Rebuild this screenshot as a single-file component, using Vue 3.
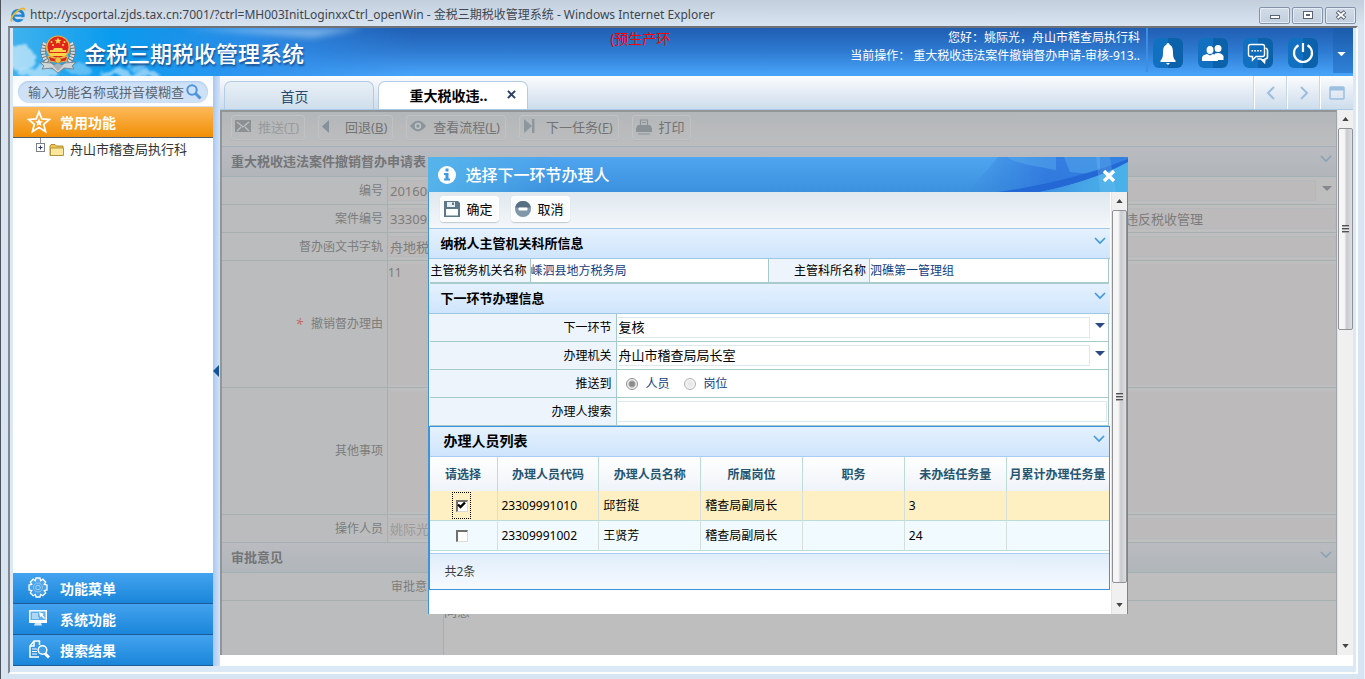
<script setup>
import { ref } from 'vue'

const address = 'http://yscportal.zjds.tax.cn:7001/?ctrl=MH003InitLoginxxCtrl_openWin - 金税三期税收管理系统 - Windows Internet Explorer'

const menus = [
  { key: 'gear', text: '功能菜单' },
  { key: 'screen', text: '系统功能' },
  { key: 'result', text: '搜索结果' }
]

const tools = [
  { key: 'mail', text: '推送', hot: 'T', faint: true },
  { key: 'back', text: '回退', hot: 'B' },
  { key: 'eye', text: '查看流程', hot: 'L' },
  { key: 'next', text: '下一任务', hot: 'F' },
  { key: 'print', text: '打印' }
]

const fields = [
  { id: 'f-no', label: '编号', value: '201600', caret: true },
  { id: 'f-case', label: '案件编号', value: '333092', extra: '违反税收管理' },
  { id: 'f-doc', label: '督办函文书字轨', value: '舟地税' }
]

const columns = ['请选择', '办理人员代码', '办理人员名称', '所属岗位', '职务', '未办结任务量', '月累计办理任务量']
const people = ref([
  { code: '23309991010', name: '邱哲挺', post: '稽查局副局长', duty: '', open: '3', month: '', picked: true },
  { code: '23309991002', name: '王贤芳', post: '稽查局副局长', duty: '', open: '24', month: '', picked: false }
])
const target = ref('person')
const reason = ref('11')
const opinion = ref('同意')
</script>

<template>
  <div class="window">
    <header class="titlebar">
      <svg class="ie" viewBox="0 0 16 16" width="16" height="16">
        <circle cx="8" cy="8.6" r="5.2" fill="none" stroke="#1d86d8" stroke-width="3" />
        <path d="M4 8.6h9" stroke="#1d86d8" stroke-width="2.2" />
        <path d="M10 11.2h5" stroke="#ccd8e5" stroke-width="2" />
        <path d="M2.2 14.6C-.6 13.4 3 7 7.500 4 11 1.300 14.800 .2 14.600 3.400" fill="none" stroke="#e9b62c" stroke-width="1.700" />
      </svg>
      <span class="address">{{ address }}</span>
      <div class="winbtns">
        <button type="button" aria-label="最小化"><svg width="12" height="10" viewBox="0 0 12 10"><rect x="1.500" y="5.500" width="9" height="3" fill="#fff" stroke="#5b6473" /></svg></button>
        <button type="button" aria-label="最大化"><svg width="12" height="10" viewBox="0 0 12 10"><rect x="1.500" y="1.500" width="9" height="7" fill="#fff" stroke="#5b6473" /><rect x="4.500" y="4.500" width="3" height="1" fill="#fff" stroke="#5b6473" /></svg></button>
        <button type="button" aria-label="关闭"><svg width="12" height="10" viewBox="0 0 12 10"><path d="M2 1.500l8 7M10 1.500l-8 7" stroke="#5b6473" stroke-width="3.800" /><path d="M2.500 2l7 6M9.500 2l-7 6" stroke="#fff" stroke-width="1.800" /></svg></button>
      </div>
    </header>

    <div class="frame">
      <div class="banner">
        <svg class="sky" viewBox="0 0 400 48" width="400" height="48">
          <defs>
            <filter id="soft" x="-30%" y="-50%" width="160%" height="200%"><feGaussianBlur stdDeviation="3" /></filter>
            <filter id="cloud" x="-30%" y="-30%" width="160%" height="160%">
              <feTurbulence type="fractalNoise" baseFrequency="0.07" numOctaves="3" seed="4" result="n" />
              <feDisplacementMap in="SourceGraphic" in2="n" scale="16" />
              <feGaussianBlur stdDeviation="1" />
            </filter>
            <linearGradient id="cyan" x1="0" x2="1"><stop offset="0" stop-color="#3fb2ee" /><stop offset=".25" stop-color="#0a9bee" /><stop offset=".6" stop-color="#2a92ee" stop-opacity=".8" /><stop offset="1" stop-color="#2f86e0" stop-opacity="0" /></linearGradient>
          </defs>
          <rect width="400" height="48" fill="url(#cyan)" />
          <path d="M170 0H350L300 10Z" fill="#a9d3f7" opacity=".6" filter="url(#soft)" />
          <g fill="#fff" filter="url(#cloud)">
            <ellipse cx="6" cy="28" rx="13" ry="14" opacity=".55" />
            <ellipse cx="26" cy="44" rx="22" ry="6" opacity=".5" />
            <ellipse cx="116" cy="46" rx="30" ry="4" opacity=".5" />
            <ellipse cx="126" cy="38" rx="12" ry="4" opacity=".35" />
            <ellipse cx="66" cy="42" rx="12" ry="5" opacity=".3" />
          </g>
        </svg>
        <div class="brand">
          <svg class="emblem" viewBox="0 0 38 40" width="38" height="40">
            <path d="M6 9C2 17 4 28 15 33M32 9c4 8 2 19-9 24" fill="none" stroke="#6f7276" stroke-width="5" />
            <path d="M6 9C2 17 4 28 15 33M32 9c4 8 2 19-9 24" fill="none" stroke="#d9dcdf" stroke-width="4" stroke-dasharray="2 1" />
            <path d="M1 28l11 1 7 5 7-5 11-1-4 4 2 3-10-1-6 5-6-5-10 1 2-3z" fill="#cfd5d9" stroke="#727a81" stroke-width=".8" />
            <path d="M14 32l5-3 5 3-5 5z" fill="#a8b0b8" />
            <circle cx="19" cy="13.500" r="12" fill="#e9b33c" />
            <circle cx="19" cy="13" r="10.500" fill="#e0251d" />
            <path d="M19 3.500l1 2.200 2.400.2-1.800 1.500.6 2.300-2.200-1.200-2.200 1.200.6-2.300-1.800-1.500 2.400-.2z" fill="#ffd94d" />
            <g fill="#ffd94d"><circle cx="12.500" cy="8" r="1" /><circle cx="25.500" cy="8" r="1" /><circle cx="14" cy="11" r="1" /><circle cx="24" cy="11" r="1" /></g>
            <path d="M11 18h16v-2h-3l-1-2h-8l-1 2h-3zM10 19h18l-2 3H12z" fill="#ffd24a" />
            <path d="M9 22q10 5 20 0l-2 5q-8 3-16 0z" fill="#d9261d" stroke="#eab842" />
            <circle cx="19" cy="26" r="3" fill="#efc14a" stroke="#b1771d" stroke-width=".6" />
          </svg>
          <h1>金税三期税收管理系统</h1>
        </div>
        <p class="notice">(预生产环</p>
        <div class="user">
          <p>您好：姚际光，舟山市稽查局执行科</p>
          <p>当前操作： 重大税收违法案件撤销督办申请-审核-913..</p>
        </div>
        <nav class="quick">
          <button type="button" aria-label="提醒"><svg viewBox="0 0 30 30" width="30" height="30"><path d="M15 5a1.500 1.500 0 0 1 1.500 1.500C19.500 8 20 11 20 15c0 4 .8 6 2.500 7.500V24h-15v-1.500C9.200 21 10 19 10 15c0-4 .5-7 3.500-8.500A1.500 1.500 0 0 1 15 5zM13 25h4l-2 2z" fill="#fff" /></svg></button>
          <button type="button" aria-label="联系人"><svg viewBox="0 0 30 30" width="30" height="30"><g fill="#fff"><circle cx="20" cy="10.500" r="3.500" /><path d="M17 15.500q6-1.500 8.500 2.500v4h-6q-1-3-3.500-4z" /><ellipse cx="12" cy="12" rx="4" ry="4.500" stroke="#0d68b4" /><path d="M4 23v-3q0-3 5-4l3 1.500 3-1.500q5 1 5 4v3z" /></g></svg></button>
          <button type="button" aria-label="消息"><svg viewBox="0 0 30 30" width="30" height="30"><path d="M22.500 10q2 .5 2 2.500v6q0 2.500-2.500 2.500l-.5 3.500-3.500-3.500h-3.500" fill="none" stroke="#fff" stroke-width="1.600" /><path d="M18 21h3.500v3.500z" fill="#fff" /><path d="M7.500 6.500h12q2 0 2 2v8q0 2-2 2H13l-3.500 3.500v-3.500h-2q-2 0-2-2v-8q0-2 2-2z" fill="#0f6bb9" stroke="#fff" stroke-width="1.400" /><g fill="#fff"><rect x="8.500" y="12" width="1.600" height="1.600" /><rect x="11.300" y="12" width="1.600" height="1.600" /><rect x="14.100" y="12" width="1.600" height="1.600" /><rect x="16.900" y="12" width="1.600" height="1.600" /></g></svg></button>
          <button type="button" aria-label="退出"><svg viewBox="0 0 30 30" width="30" height="30"><path d="M10.500 7.200a9 9 0 1 0 9 0M15 5v9" fill="none" stroke="#fff" stroke-width="2.200" /></svg></button>
          <button type="button" class="more" aria-label="更多"><svg viewBox="0 0 10 6" width="9" height="5"><path d="M0 0h10L5 5z" fill="#fff" /></svg></button>
        </nav>
      </div>

      <div class="body">
        <aside class="side">
          <div class="search">
            <label>
              <input type="text" placeholder="输入功能名称或拼音模糊查" aria-label="搜索功能" />
              <svg viewBox="0 0 16 16" width="16" height="16"><circle cx="6" cy="6" r="4.700" fill="none" stroke="#4d94dc" stroke-width="2" /><path d="M9.500 9.500l5 5" stroke="#4d94dc" stroke-width="3" /></svg>
            </label>
          </div>
          <button type="button" class="acc hot">
            <svg viewBox="0 0 24 24" width="24" height="24"><path d="M12 1.800l2.900 7 7.500.6-5.700 4.900 1.800 7.300-6.500-4-6.500 4 1.800-7.300-5.700-4.900 7.500-.6z" fill="none" stroke="#fff" stroke-width="1.800" /><path d="M12 8.500l1.100 2.600 2.700.3-2 1.800.6 2.700-2.400-1.500-2.400 1.500.6-2.700-2-1.800 2.700-.3z" fill="#fff" /></svg>
            <span>常用功能</span>
          </button>
          <div class="tree">
            <svg viewBox="0 0 10 14" width="10" height="14"><path d="M4.500 0v5" stroke="#8d929b" /><rect x=".5" y="5.500" width="8" height="8" fill="#fff" stroke="#7b7f88" /><path d="M2.500 9.500h4M4.500 7.500v4" stroke="#27338a" /></svg>
            <svg viewBox="0 0 16 14" width="16" height="14"><path d="M1 3l1-1.500h4L7.500 3H14v9.500H1z" fill="#f0c54a" stroke="#9a7b22" stroke-width=".8" /><path d="M1.500 5H14.500v7.500H1.500z" fill="#fbe79b" stroke="#a58a32" stroke-width=".8" /></svg>
            <a href="#">舟山市稽查局执行科</a>
          </div>
          <button v-for="m in menus" :key="m.key" type="button" class="acc">
            <svg v-if="m.key === 'gear'" viewBox="0 0 24 24" width="24" height="24"><path d="M10 2h4l.6 2.700 2.300-1.500 2.800 2.800-1.400 2.400L21 9v5l-2.700.7 1.400 2.300-2.800 2.800-2.300-1.400L14 21h-4l-.6-2.600-2.300 1.400L4.300 17l1.400-2.300L3 14V9l2.700-.6L4.300 6l2.800-2.800 2.300 1.500z" fill="#ffffff22" stroke="#fff" stroke-width="1.300" /><circle cx="12" cy="11.500" r="4.500" fill="none" stroke="#8fc8f7" /><circle cx="12" cy="11.500" r="2.300" fill="none" stroke="#a9d5fa" /></svg>
            <svg v-else-if="m.key === 'screen'" viewBox="0 0 24 24" width="24" height="24"><path d="M3 3h18v13H3z" fill="#fff" /><path d="M4.500 4.500h15V13h-15z" fill="#5fb0ee" /><path d="M6 7h6M6 9h6M6 11h7" stroke="#fff" /><path d="M13 5l5 2-1.500 1 2.500 3-1 1-2.800-3-1 1.500z" fill="#fff" /><path d="M9 16h6l1 2.500H8z" fill="#d3e9fb" /></svg>
            <svg v-else viewBox="0 0 24 24" width="24" height="24"><path d="M13.500 7V3H8L4 8v11h9M8 3v5H4" fill="none" stroke="#fff" stroke-width="1.500" /><path d="M6 11h5M6 13.500h5M6 16h5" stroke="#fff" /><circle cx="16.500" cy="12" r="4.300" fill="#3e9fe8" stroke="#fff" stroke-width="1.500" /><path d="M19 15.500l4 4" stroke="#fff" stroke-width="3" /></svg>
            <span>{{ m.text }}</span>
          </button>
        </aside>
        <div class="splitter"><svg viewBox="0 0 6 12" width="6" height="12"><path d="M6 0v12L0 6z" fill="#12539c" /></svg></div>

        <main class="main">
          <div class="tabbar">
            <button type="button" class="tab">首页</button>
            <button type="button" class="tab on"><span>重大税收违..</span><svg viewBox="0 0 10 10" width="9" height="9"><path d="M1 1l8 8M9 1L1 9" stroke="#2a4167" stroke-width="2.200" /></svg></button>
            <div class="tabnav">
              <button type="button" aria-label="上一个"><svg viewBox="0 0 10 14" width="10" height="14"><path d="M8 1L2 7l6 6" fill="none" stroke="#9abfe0" stroke-width="2" /></svg></button>
              <button type="button" aria-label="下一个"><svg viewBox="0 0 10 14" width="10" height="14"><path d="M2 1l6 6-6 6" fill="none" stroke="#9abfe0" stroke-width="2" /></svg></button>
              <button type="button" aria-label="全屏"><svg viewBox="0 0 16 14" width="16" height="14"><rect x="1" y="1" width="14" height="12" rx="1" fill="none" stroke="#9abfe0" stroke-width="1.500" /><path d="M1 1h14v3.500H1z" fill="#9abfe0" /></svg></button>
            </div>
          </div>

          <div class="stage">
            <div class="pane">
              <div class="toolbar">
                <button v-for="t in tools" :key="t.key" type="button" class="tool" :class="{ faint: t.faint }">
                  <svg viewBox="0 0 16 16" width="16" height="16">
                    <g v-if="t.key === 'mail'"><path d="M0 1h16v12H0z" fill="#8c9093" /><path d="M2 3l6 5 6-5M2 12l4-4M14 12l-4-4" fill="none" stroke="#bec1c3" stroke-width="1.300" /></g>
                    <path v-else-if="t.key === 'back'" d="M7 1v13L0 7.500z" fill="#85909a" />
                    <g v-else-if="t.key === 'eye'"><path d="M0 7Q8-3.500 16 7 8 17.500 0 7z" fill="#8b969c" /><circle cx="8" cy="7" r="3.200" fill="#c0c4c6" /><circle cx="8" cy="7" r="1.700" fill="#8b969c" /></g>
                    <path v-else-if="t.key === 'next'" d="M1 0l8 7-8 7zM9 0h2.500v14H9z" fill="#8d989e" />
                    <g v-else><path d="M4.500 6V1h7v5M6 3.500h4" fill="none" stroke="#8a9297" stroke-width="1.200" /><path d="M2 6h12l2 3v4H0V9z" fill="#8a9297" /><path d="M2 15h12" stroke="#8a9297" /></g>
                  </svg>
                  <span>{{ t.text }}<template v-if="t.hot">(<u>{{ t.hot }}</u>)</template></span>
                </button>
              </div>
              <h2 class="sect"><span>重大税收违法案件撤销督办申请表</span><svg class="chev" viewBox="0 0 12 8" width="12" height="8"><path d="M1 1l5 5 5-5" /></svg></h2>
              <div v-for="f in fields" :key="f.id" class="row">
                <label :for="f.id">{{ f.label }}</label>
                <div class="cell">
                  <input :id="f.id" type="text" :value="f.value" disabled />
                  <input v-if="f.extra" class="extra" type="text" :value="f.extra" aria-label="案件名称" disabled />
                  <svg v-if="f.caret" class="caret" viewBox="0 0 10 6" width="10" height="6"><path d="M0 0h10L5 5z" fill="#85888c" /></svg>
                </div>
              </div>
              <div class="row tall">
                <label for="reason"><i>*</i>撤销督办理由</label>
                <div class="cell"><textarea id="reason" v-model="reason" disabled></textarea></div>
              </div>
              <div class="row tall">
                <label for="other">其他事项</label>
                <div class="cell"><textarea id="other" disabled></textarea></div>
              </div>
              <div class="row faint">
                <label for="operator">操作人员</label>
                <div class="cell"><input id="operator" type="text" value="姚际光" disabled /></div>
              </div>
              <h2 class="sect"><span>审批意见</span><svg class="chev" viewBox="0 0 12 8" width="12" height="8"><path d="M1 1l5 5 5-5" /></svg></h2>
              <div class="row wide"><label for="opinion">审批意见</label><div class="cell"></div></div>
              <div class="row wide last"><label for="opinion"></label><div class="cell"><textarea id="opinion" v-model="opinion" disabled></textarea></div></div>
            </div>

            <div class="bar"><svg viewBox="0 0 8 5" width="7" height="4"><path d="M4 0l4 5H0z" fill="#444" /></svg><div class="thumb page"><b></b></div><svg viewBox="0 0 8 5" width="7" height="4"><path d="M4 5l4-5H0z" fill="#444" /></svg></div>

            <div class="veil">
              <section class="dialog" role="dialog" aria-labelledby="dlg-title">
                <header class="dlg-head">
                  <svg class="swoosh" viewBox="0 0 180 35" preserveAspectRatio="none">
                    <defs><linearGradient id="deep" x1="0" x2="1"><stop offset="0" stop-color="#2d74da" stop-opacity="0" /><stop offset=".5" stop-color="#2b70dc" /><stop offset="1" stop-color="#2a77dd" /></linearGradient><linearGradient id="aqua" x1="0" x2="1"><stop offset="0" stop-color="#3c8fe0" /><stop offset=".5" stop-color="#46a5e6" /><stop offset="1" stop-color="#4ab2ea" /></linearGradient></defs>
                    <path d="M50 0H180V10Q120 30 60 35H20Z" fill="url(#deep)" opacity=".75" />
                    <path d="M60 0q0 5 48 13V0zM116 0l6 15 30 3V0z" fill="#5cafee" opacity=".45" />
                    <path d="M50 35Q125 24 180 2v4Q140 26 92 35z" fill="#2468d6" />
                    <path d="M92 35Q145 24 180 5v30z" fill="url(#aqua)" />
                    <path d="M148 0h14l6 35h-16z" fill="#7cc8f2" opacity=".25" />
                  </svg>
                  <svg viewBox="0 0 18 18" width="18" height="18"><circle cx="9" cy="9" r="9" fill="#fff" /><path d="M7.500 2.500h3v3h-3zM6 7h4.500v5.500H12V14.500H6v-2h1.500V9H6z" fill="#3e9be0" /></svg>
                  <h2 id="dlg-title">选择下一环节办理人</h2>
                  <button type="button" aria-label="关闭"><svg viewBox="0 0 14 14" width="14" height="14"><path d="M2 2l10 10M12 2L2 12" stroke="#fff" stroke-width="3.400" /></svg></button>
                </header>
                <div class="dlg-body">
                  <div class="dlg-main">
                    <div class="toolbar light">
                      <button type="button" class="tool"><svg viewBox="0 0 16 16" width="16" height="16"><path d="M0 0h14l2 2v14H0z" fill="#5c7889" /><path d="M5 1h6v5H3V1z" fill="#e9eef1" /><path d="M8 1.500h2V4H8z" fill="#5c7889" /><path d="M2 8h12v6.500H2z" fill="#fff" /></svg><span>确定</span></button>
                      <button type="button" class="tool"><svg viewBox="0 0 16 16" width="16" height="16"><circle cx="8" cy="8" r="8" fill="#7f97a8" /><path d="M.3 6.500a7.800 7.800 0 0 1 15.400 0z" fill="#566f82" /><rect x="3.500" y="6.500" width="9" height="3" rx="1" fill="#fff" /></svg><span>取消</span></button>
                    </div>
                    <h3 class="band"><span>纳税人主管机关科所信息</span><svg class="chev" viewBox="0 0 12 8" width="12" height="8"><path d="M1 1l5 5 5-5" /></svg></h3>
                    <dl class="info">
                      <dt>主管税务机关名称</dt><dd>嵊泗县地方税务局</dd>
                      <dt>主管科所名称</dt><dd>泗礁第一管理组</dd>
                    </dl>
                    <h3 class="band"><span>下一环节办理信息</span><svg class="chev" viewBox="0 0 12 8" width="12" height="8"><path d="M1 1l5 5 5-5" /></svg></h3>
                    <form class="form">
                      <div class="line"><label for="step">下一环节</label><div class="val"><select id="step"><option>复核</option></select><svg class="caret" viewBox="0 0 10 6" width="10" height="6"><path d="M0 0h10L5 5z" fill="#294a86" /></svg></div></div>
                      <div class="line"><label for="org">办理机关</label><div class="val"><select id="org"><option>舟山市稽查局局长室</option></select><svg class="caret" viewBox="0 0 10 6" width="10" height="6"><path d="M0 0h10L5 5z" fill="#294a86" /></svg></div></div>
                      <div class="line"><span class="lab">推送到</span><div class="val radios">
                        <label><input v-model="target" type="radio" value="person" />人员</label>
                        <label><input v-model="target" type="radio" value="post" />岗位</label>
                      </div></div>
                      <div class="line"><label for="find">办理人搜索</label><div class="val"><input id="find" type="text" /></div></div>
                    </form>
                    <div class="list">
                      <h3 class="band big"><span>办理人员列表</span><svg class="chev" viewBox="0 0 12 8" width="12" height="8"><path d="M1 1l5 5 5-5" /></svg></h3>
                      <table>
                        <thead><tr><th v-for="c in columns" :key="c">{{ c }}</th></tr></thead>
                        <tbody>
                          <tr v-for="p in people" :key="p.code" :class="{ picked: p.picked }">
                            <td class="tick"><label><input v-model="p.picked" type="checkbox" :aria-label="p.name" /><svg v-if="p.picked" viewBox="0 0 9 9" width="9" height="9"><path d="M1 3.500l2.500 2.500L8 1.500" fill="none" stroke="#000" stroke-width="2.400" /></svg></label></td>
                            <td>{{ p.code }}</td><td>{{ p.name }}</td><td>{{ p.post }}</td><td>{{ p.duty }}</td><td>{{ p.open }}</td><td>{{ p.month }}</td>
                          </tr>
                        </tbody>
                      </table>
                      <p class="total">共2条</p>
                    </div>
                  </div>
                  <div class="bar"><svg viewBox="0 0 8 5" width="7" height="4"><path d="M4 0l4 5H0z" fill="#444" /></svg><div class="thumb"><b></b></div><svg viewBox="0 0 8 5" width="7" height="4"><path d="M4 5l4-5H0z" fill="#444" /></svg></div>
                </div>
              </section>
            </div>
          </div>
        </main>
      </div>
    </div>
  </div>
</template>

<style>
html, body { margin: 0; background: #d8e4f1; }
</style>

<style scoped>
.window, .window * { box-sizing: border-box; }
.window {
  min-height: 100vh; display: flex; flex-direction: column;
  border-left: 1px solid #4d545c; border-right: 1px solid #e9f1f8;
  background: linear-gradient(#c3cfdc, #d9e4f1 26px, #d7e4f1);
  font: 12px/18px "Noto Sans", "Noto Sans CJK SC", sans-serif; color: #000;
}
.window button { font: inherit; color: inherit; border: 0; padding: 0; background: none; }
.window input, .window select, .window textarea { font: inherit; color: inherit; }
.window svg { display: block; flex: none; }
h1, h2, h3, p, dl, dd { margin: 0; font-size: 12px; }

.titlebar { height: 26px; display: flex; align-items: center; gap: 4px; padding: 4px 8px 0 9px; color: #3d4650; }
.address { flex: 1; white-space: nowrap; overflow: hidden; }
.winbtns { display: flex; gap: 2px; }
.winbtns button { width: 31px; height: 17px; display: grid; place-items: center; border: 1px solid #8593a9; border-radius: 2px; background: linear-gradient(#d2dce8, #c2cfdf); box-shadow: inset 0 0 0 1px #e3ebf4; }

.frame { flex: 1; display: flex; flex-direction: column; margin: 0 6px 5px 7px; padding: 0 3px 6px; border: 2px solid; border-color: #6f7276 #fdfdfd #fdfdfd #85888d; background: #dbe9f7; }
.banner { position: relative; height: 48px; display: flex; align-items: flex-start; background: linear-gradient(#1f5eb3, #2f7bd2 50%, #49a6fb); color: #fff; }
.sky { position: absolute; left: 0; top: 0; }
.brand { position: relative; display: flex; align-items: center; gap: 7px; height: 48px; margin: 2px 0 0 26px; }
.brand h1 { padding-bottom: 2px; font-size: 22px; line-height: 32px; font-weight: 500; text-shadow: 1px 2px 2px #1c4f8f; white-space: nowrap; }
.notice { width: 240px; margin-left: auto; padding-top: 2px; font-size: 14px; color: #f00; }
.user { padding-top: 1px; text-align: right; white-space: nowrap; }
.quick { display: flex; gap: 15px; height: 44px; margin-left: 6px; padding-left: 5px; border-left: 2px solid #3d8ee0; }
.quick button { width: 30px; height: 30px; margin-top: 10px; border-radius: 6px; background: linear-gradient(90deg, #1270c0 50%, #0b62ab 50%); }
.quick .more { width: 20px; height: 45px; margin-top: 0; border-radius: 0; display: grid; place-items: center; background: linear-gradient(#1b5bab, #2f82d8); padding: 8px 3px 0 0; }

.body { flex: 1; display: flex; }
.side { width: 200px; display: flex; flex-direction: column; background: #fff; }
.search { height: 31px; padding: 5px; background: linear-gradient(#f7fafd, #fff); border-bottom: 1px solid #d5dfe9; }
.search label { height: 22px; display: flex; align-items: center; padding: 0 6px 0 10px; border-radius: 11px; background: #cfe1f7; box-shadow: inset 0 1px 2px #a9c9ec; }
.search input { flex: 1; min-width: 0; padding: 0; border: 0; outline: 0; background: none; font-size: 13px; }
.search input::placeholder { color: #5b6673; opacity: 1; }
.acc { height: 31px; flex: none; display: flex; align-items: center; }
.side .acc { gap: 9px; padding: 0 0 0 14px; border-bottom: 1px solid #20599a; background: linear-gradient(#44a3ef, #1a86da); color: #fff; font-size: 14px; font-weight: 700; }
.side .acc svg { margin-left: -1px; margin-right: 1px; }
.side .acc span { padding-top: 2px; }
.side .hot { background: linear-gradient(#fdb95a, #f18f05); border-bottom-color: #4d5c70; }
.side .hot svg { margin: 0; }
.tree { flex: 1; display: flex; align-items: flex-start; gap: 3px; padding: 0 22px 0 23px; }
.tree svg + svg { margin: 5px 2px 0 0; }
.tree a { margin-top: 2px; font-size: 13px; line-height: 18px; color: #333; text-decoration: none; white-space: nowrap; }
.splitter { width: 7px; display: flex; align-items: center; background: linear-gradient(90deg, #a9c8ee, #cfe3fa); }

.main { flex: 1; min-width: 0; display: flex; flex-direction: column; background: #fff; }
.tabbar { height: 34px; display: flex; align-items: flex-end; gap: 4px; padding-left: 4px; background: linear-gradient(#fbfdfe, #e4ebf4 50%, #cdddec); border-bottom: 1px solid #a8c8e4; }
.tabbar .tab { width: 150px; height: 28px; display: flex; align-items: center; justify-content: center; gap: 20px; padding: 2px 9px 0 0; border: 1px solid #b4cbe5; border-bottom: 0; border-radius: 7px 7px 0 0; background: linear-gradient(#e9f0f6, #cfdeec); color: #29486f; font-size: 14px; }
.tabbar .on { background: #fff; color: #000; font-weight: 700; padding: 0 0 0 20px; }
.tab svg { margin-bottom: 2px; }
.tabnav { display: flex; align-self: stretch; margin-left: auto; }
.tabnav button { width: 33px; display: grid; place-items: center; border-left: 1px solid #fff; box-shadow: -1px 0 #c6d8e8; }

.stage { flex: 1; position: relative; display: flex; margin-bottom: 11px; }
.pane { flex: 1; min-width: 0; display: flex; flex-direction: column; border: 2px solid #929699; border-right: 1px solid #9fa5a8; border-bottom: 0; background: #bebebe; color: #7c7c7c; }
.toolbar { height: 35px; display: flex; align-items: center; gap: 13px; padding: 0 8px 4px 9px; border-bottom: 1px solid #a3b1bb; background: linear-gradient(#b3b7b9, #bdbdbe); }
.tool { height: 25px; display: flex; align-items: center; gap: 7px; }
.toolbar .tool { padding: 0 6px 0 4px; border-radius: 4px; box-shadow: inset 0 0 0 1px #c1c2c3, 0 1px #b3b6b8; font-size: 13px; color: #727375; }
.toolbar .faint { color: #999b9e; }
.sect { height: 30px; display: flex; align-items: center; justify-content: space-between; padding: 0 4px 2px 9px; border-bottom: 1px solid #a3b1b5; background: linear-gradient(#b9bbc0, #b1b6bb); font-size: 13px; color: #747577; }
.chev { margin-bottom: 4px; fill: none; stroke: #3f98de; stroke-width: 1.6; }
.sect .chev { stroke: #8ba3b5; }
.row { height: 28px; display: flex; border-bottom: 1px solid #a7b0b0; }
.row > label { width: 166px; flex: none; display: flex; align-items: center; justify-content: flex-end; gap: 8px; padding-right: 4px; border-right: 1px solid #a7b0b0; background: #bbbcbd; }
.row i { color: #c56a64; font-size: 14px; }
.cell { flex: 1; display: flex; align-items: center; min-width: 0; }
.cell input, .cell textarea { flex: 1; min-width: 0; height: 21px; margin: 0; padding: 0 2px; border: 1px solid #b5b9bc; border-left: 0; background: #bcbaba; font-size: 13px; }
.cell .extra { flex: none; width: 213px; }
.cell .caret { margin: 0 4px 4px 6px; }
.tall { height: 127px; }
.cell textarea { height: 121px; padding: 0; border: 0; resize: none; font-size: 12px; }
.faint input { color: #9b9b9b; }
.wide > label { width: 222px; }
.wide > .cell { align-items: stretch; }
.last { flex: 1; border: 0; }
.cell #opinion { height: auto; padding-top: 1px; background: #bebebe; font-size: 13px; }

.bar { width: 16px; flex: none; display: flex; flex-direction: column; align-items: center; padding: 7px 0; background: #f0f0f0; border-left: 1px solid #e4e4e4; }
.bar > svg:last-child { margin-top: auto; }
.thumb { width: 15px; flex: 1; margin: 7px 0 20px; display: grid; place-items: center; border: 1px solid #8f9196; border-radius: 2px; background: linear-gradient(90deg, #f6f6f6 40%, #c9cacd 60%, #dfe0e2); }
.thumb b { width: 7px; height: 8px; background: repeating-linear-gradient(#505257 0 1px, #aaa 1px 2px, #e7e7e7 2px 3px); }
.page { flex: 0 0 38%; }

.veil { position: absolute; inset: 0; display: flex; align-items: center; justify-content: center; padding: 6px 18px 0 0; }
.dialog { width: 700px; max-width: 100%; background: #fff; }
.dlg-head { position: relative; height: 35px; display: flex; align-items: center; gap: 10px; padding: 0 12px 0 10px; background: linear-gradient(100deg, #56b4ea, #4aa3ea00 18%), linear-gradient(#4fa5ef, #3b91de); color: #fff; }
.dlg-head > svg, .dlg-head > button { position: relative; }
.dlg-head > .swoosh { position: absolute; right: 0; top: 0; width: 180px; height: 35px; }
.dlg-head h2 { position: relative; flex: 1; font-size: 16px; line-height: 24px; font-weight: 500; }
.dlg-head button { margin-top: 3px; }
.dlg-body { display: flex; border: 1px solid #3e93dc; border-width: 0 1px; }
.dlg-main { flex: 1; min-width: 0; margin-right: 1px; padding-bottom: 24px; }
.light { height: 37px; gap: 12px; padding: 0 10px 2px 11px; border-color: #a5c8e4; background: linear-gradient(#dee8ef, #f4f7fa); }
.light .tool { height: 26px; background: #fafcfd; box-shadow: inset 0 0 0 1px #fff, 0 1px 1px #bfc8cf; color: #000; }
.band { height: 30px; display: flex; align-items: center; justify-content: space-between; padding: 0 4px 2px 12px; border-bottom: 1px solid #9ec7e2; background: linear-gradient(#e5f1fe, #cfe5fc); font-size: 13px; }
.info { height: 25px; display: flex; margin: 0 1px; border-bottom: 2px solid #a8cccc; line-height: 23px; white-space: nowrap; }
.info dt { width: 101px; text-align: right; padding-right: 3px; background: #edf4fc; border-right: 1px solid #a5caca; }
.info dd { flex: 1; color: #12407f; border-right: 1px solid #a5caca; }
.form { margin: 0 1px; border-right: 1px solid #a5caca; }
.line { height: 28px; display: flex; border-bottom: 1px solid #a5caca; }
.line > label, .lab { width: 187px; flex: none; padding-right: 4px; text-align: right; line-height: 27px; background: #edf4fc; border-right: 1px solid #a5caca; }
.val { flex: 1; display: flex; align-items: center; padding-right: 1px; }
.val select, .val > input { flex: 1; min-width: 0; height: 21px; padding: 0 2px; border: 1px solid #dce9ef; border-left-color: #fff; background: #fff; appearance: none; outline: 0; }
.line .val select { padding: 0 1px 3px; font-size: 13px; }
.val .caret { margin: 0 2px 4px 5px; }
.radios { color: #12407f; }
.radios label { display: flex; align-items: center; gap: 8px; margin-right: 14px; }
.radios label:first-child { margin-left: 9px; }
.radios input { appearance: none; width: 12px; height: 12px; margin: 0; border: 1px solid #b4b4b4; border-radius: 50%; background: radial-gradient(#e4e4e4, #fafafa); }
.radios input:checked { border-color: #909090; background: radial-gradient(#8c8c8c 0 2px, #a3a3a3 3px, #f0f0f0 4px); }
.list { border: 1px solid #3e93dc; }
.big { font-size: 14px; padding-left: 14px; border-color: #a9cdf1; }
table { width: 100%; table-layout: fixed; border-collapse: separate; border-spacing: 0; }
th:first-child { width: 68px; }
th { height: 34px; padding: 2px 0 0; background: linear-gradient(#fff, #eff3f9); color: #255571; white-space: nowrap; border-right: 1px solid #bcdcd6; }
td { height: 30px; padding: 0 4px; border-right: 1px solid #d5dfdc; border-bottom: 1px solid #bcdcd6; background: #f1fafe; white-space: nowrap; }
th:last-child, td:last-child { border-right: 0; }
.picked td { background: #fff0c4; }
.tick label { position: relative; width: 19px; height: 27px; margin: 0 auto; display: grid; place-items: center; }
td.tick { padding: 0 3px 0 0; }
.picked .tick label { outline: 1px dotted #000; outline-offset: -1px; }
.tick label > * { grid-area: 1 / 1; }
.tick svg { pointer-events: none; z-index: 1; }
.tick input { appearance: none; width: 12px; height: 12px; margin: 0; border: 1px solid #dcdad5; border-top: 2px solid #73716c; border-left: 2px solid #73716c; background: #fff; }
.total { height: 36px; margin-top: 2px; padding: 0 15px; line-height: 35px; border-top: 1px solid #a9cdf1; background: linear-gradient(#e0edfa, #f6faff); color: #3c3c3c; }
</style>
